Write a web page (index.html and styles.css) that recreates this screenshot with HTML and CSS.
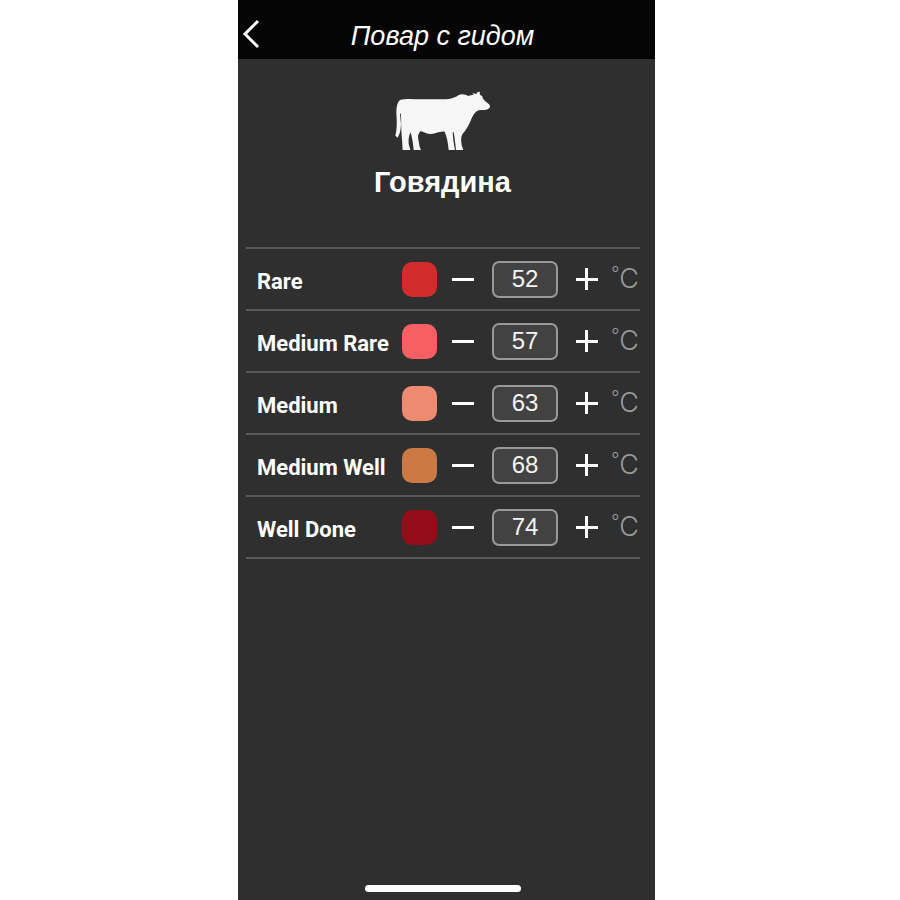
FILE: index.html
```html
<!DOCTYPE html>
<html lang="ru">
<head>
  <meta charset="UTF-8" />
  <meta name="viewport" content="width=device-width, initial-scale=1.0"/>
  <title>Повар с гидом</title>
  <link rel="stylesheet" href="styles.css">
</head>
<body>

  <div class="phone">

    <!-- Top bar -->
    <header class="topbar">
      <button class="back-btn" type="button" aria-label="Назад">
        <svg width="18" height="30" viewBox="0 0 18 30" fill="none" stroke="#fff" stroke-width="3">
          <path d="M16 2 L3 15 L16 28"/>
        </svg>
      </button>
      <h1 class="topbar-title">Повар с гидом</h1>
    </header>

    <main>
      <section class="meat">
        <svg class="meat-icon" viewBox="30 20 288 180" fill="#f6f6f6">
          <path d="M45 47 C60 42 85 44 110 45 L185 45 C200 43 212 40 220 33 C230 27 240 30 250 35 C256 33 260 32 266 32 L262 26 L274 29 L278 23 L284 22 L285 31 L292 36 L293 42 L300 50 L312 60 C318 66 314 74 304 76 C293 77 283 76 276 80 C266 88 262 97 258 106 C252 122 245 132 240 140 L232 150 C227 160 228 170 230 182 L235 197 L213 197 C211 178 209 160 206 144 L203 144 C204 160 206 178 210 197 L191 197 C189 175 186 158 179 142 C165 139 150 149 135 149 C122 148 114 142 107 140 C99 148 98 156 100 165 L104 188 L108 197 L86 197 C84 175 81 160 77 144 C72 152 70 165 71 178 L76 197 L53 197 C52 175 50 155 49 140 L48 88 L45 88 L48 120 C47 140 44 150 38 160 L31 154 C35 140 36 120 35 100 C33 75 35 55 45 47 Z"/>
        </svg>
        <h2 class="meat-name">Говядина</h2>
      </section>

      <!-- Doneness levels -->
      <form class="levels">
        <div class="level">
          <label for="rare">Rare</label>
          <span class="swatch rare"></span>
          <button class="minus" type="button" aria-label="Rare −"></button>
          <input id="rare" type="text" inputmode="numeric" value="52">
          <button class="plus" type="button" aria-label="Rare +"></button>
          <span class="unit"><span class="degree">°</span>C</span>
        </div>
        <div class="level">
          <label for="medium-rare">Medium Rare</label>
          <span class="swatch medium-rare"></span>
          <button class="minus" type="button" aria-label="Medium Rare −"></button>
          <input id="medium-rare" type="text" inputmode="numeric" value="57">
          <button class="plus" type="button" aria-label="Medium Rare +"></button>
          <span class="unit"><span class="degree">°</span>C</span>
        </div>
        <div class="level">
          <label for="medium">Medium</label>
          <span class="swatch medium"></span>
          <button class="minus" type="button" aria-label="Medium −"></button>
          <input id="medium" type="text" inputmode="numeric" value="63">
          <button class="plus" type="button" aria-label="Medium +"></button>
          <span class="unit"><span class="degree">°</span>C</span>
        </div>
        <div class="level">
          <label for="medium-well">Medium Well</label>
          <span class="swatch medium-well"></span>
          <button class="minus" type="button" aria-label="Medium Well −"></button>
          <input id="medium-well" type="text" inputmode="numeric" value="68">
          <button class="plus" type="button" aria-label="Medium Well +"></button>
          <span class="unit"><span class="degree">°</span>C</span>
        </div>
        <div class="level">
          <label for="well-done">Well Done</label>
          <span class="swatch well-done"></span>
          <button class="minus" type="button" aria-label="Well Done −"></button>
          <input id="well-done" type="text" inputmode="numeric" value="74">
          <button class="plus" type="button" aria-label="Well Done +"></button>
          <span class="unit"><span class="degree">°</span>C</span>
        </div>
      </form>
    </main>

    <footer class="bottom">
      <div class="home-bar"></div>
    </footer>
  </div>

</body>
</html>
```
FILE: styles.css
```css
* {
  margin: 0;
  padding: 0;
  box-sizing: border-box;
}

body {
  display: flex;
  justify-content: center;
  min-height: 100vh;
  padding-right: 7px;
  background: #fff;
  font-family: "Liberation Sans", Arial, sans-serif;
}

.phone {
  display: flex;
  flex-direction: column;
  width: 100%;
  max-width: 417px;
  background: #2f2f2f;
  color: #fff;
}

main {
  flex: 1;
}

button {
  display: flex;
  align-items: center;
  background: none;
  border: none;
  color: #fff;
  cursor: pointer;
}

/* Top bar */
.topbar {
  display: grid;
  grid-template-columns: 28px 1fr 40px;
  align-items: center;
  padding: 8px 0 0 4px;
  background: #050505;
}

.topbar-title {
  padding-top: 5px;
  font-size: 27px;
  font-weight: 400;
  font-style: italic;
  line-height: 46px;
  text-align: center;
}

/* Meat */
.meat {
  display: flex;
  flex-direction: column;
  align-items: center;
  padding: 32px 8px 48px 0;
}

.meat-icon {
  width: 96px;
  height: 60px;
}

.meat-name {
  margin-top: 15px;
  font-size: 29px;
  line-height: 33px;
}

/* Levels */
.levels {
  margin: 0 15px 0 8px;
  border-top: 2px solid #585858;
}

.level {
  display: grid;
  grid-template-columns: 1fr 35px 55px 66px 57px 24px;
  align-items: center;
  height: 62px;
  padding: 0 1px 0 11px;
  border-bottom: 2px solid #585858;
}

.level label {
  padding-top: 5px;
  font-family: Roboto, sans-serif;
  font-size: 22px;
  font-weight: 700;
  line-height: 30px;
  white-space: nowrap;
}

.swatch {
  height: 35px;
  border-radius: 10px;
}

.rare { background: #d22b2b; }
.medium-rare { background: #f75f62; }
.medium { background: #ee8a70; }
.medium-well { background: #cc7a45; }
.well-done { background: #930d18; }

.minus,
.plus {
  justify-content: center;
  height: 36px;
}

.minus {
  padding-right: 4px;
}

.minus::before,
.plus::before {
  content: "";
  width: 22px;
  height: 22px;
  background: linear-gradient(#fff, #fff) center / 22px 3px no-repeat;
}

.plus::before {
  background:
    linear-gradient(#fff, #fff) center / 22px 3px no-repeat,
    linear-gradient(#fff, #fff) center / 3px 22px no-repeat;
}

.level input {
  width: 100%;
  height: 37px;
  border: 2px solid #999;
  border-radius: 7px;
  background: #424242;
  color: #f4f4f4;
  font-family: inherit;
  font-size: 24px;
  text-align: center;
}

.unit {
  display: flex;
  justify-content: flex-end;
  color: #999;
  font-family: Inter, sans-serif;
  font-size: 27px;
  font-weight: 300;
  line-height: 36px;
}

.degree {
  font-size: 18px;
  line-height: 26px;
}

/* Home bar */
.bottom {
  display: flex;
  justify-content: center;
  padding: 0 8px 8px 0;
}

.home-bar {
  width: 156px;
  height: 7px;
  border-radius: 4px;
  background: #fff;
}
```
